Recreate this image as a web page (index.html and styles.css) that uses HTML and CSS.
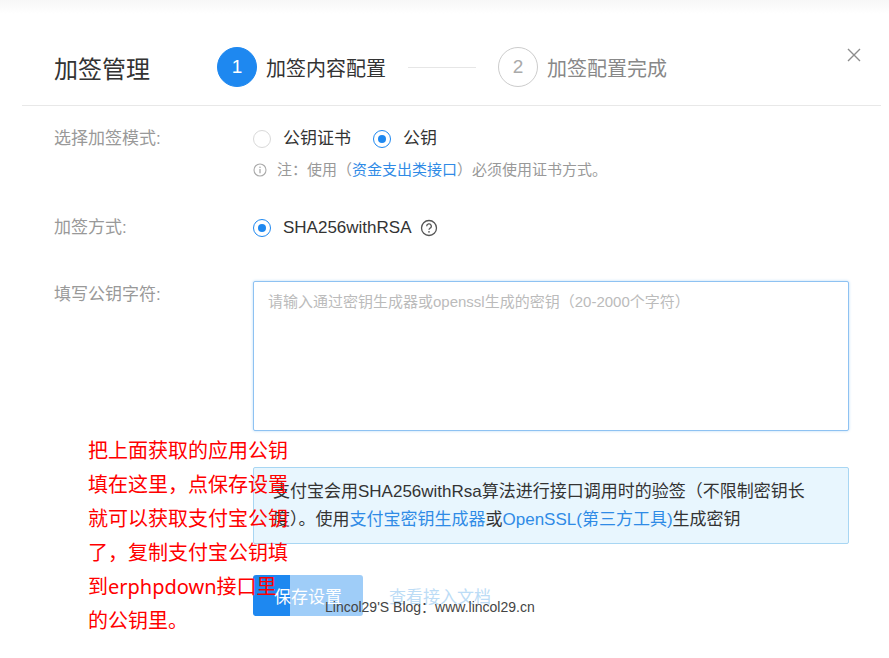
FILE: index.html
```html
<!DOCTYPE html>
<html lang="zh-CN">
<head>
  <meta charset="UTF-8" />
  <title>加签管理</title>
  <link rel="stylesheet" href="styles.css">
</head>
<body>

  <div class="dialog">
    <!-- 头部：标题 + 步骤条 -->
    <div class="dialog-head">
      <h2 class="title">加签管理</h2>
      <div class="steps">
        <span class="step-num active">1</span>
        <span class="step-text">加签内容配置</span>
        <span class="step-line"></span>
        <span class="step-num">2</span>
        <span class="step-text muted">加签配置完成</span>
      </div>
      <svg class="close" width="14" height="14" viewBox="0 0 14 14">
        <path d="M1 1L13 13M13 1L1 13" stroke="#8c8c8c" stroke-width="1.4" fill="none" />
      </svg>
    </div>

    <div class="dialog-body">
      <div class="row">
        <div class="label">选择加签模式:</div>
        <div class="field">
          <div class="radios">
            <label class="radio"><span class="dot"></span>公钥证书</label>
            <label class="radio"><span class="dot checked"></span>公钥</label>
          </div>
          <div class="note">
            <svg width="14" height="14" viewBox="0 0 14 14">
              <circle cx="7" cy="7" r="6" stroke="#aaa" stroke-width="1.1" fill="none" />
              <path d="M7 6v4.2" stroke="#aaa" stroke-width="1.3" />
              <circle cx="7" cy="4.2" r="0.8" fill="#aaa" />
            </svg>
            注：使用（<a>资金支出类接口</a>）必须使用证书方式。
          </div>
        </div>
      </div>

      <div class="row row-sign">
        <div class="label">加签方式:</div>
        <div class="field">
          <label class="radio"><span class="dot checked"></span>SHA256withRSA
            <svg class="help" width="18" height="18" viewBox="0 0 18 18">
              <circle cx="9" cy="9" r="7.5" stroke="#555" stroke-width="1.3" fill="none" />
              <path d="M6.7 7.2a2.3 2.3 0 1 1 3.3 2c-.7.4-1 .8-1 1.6" stroke="#555" stroke-width="1.3" fill="none" />
              <circle cx="9" cy="12.8" r="0.85" fill="#555" />
            </svg>
          </label>
        </div>
      </div>

      <div class="row row-key">
        <div class="label label-top">填写公钥字符:</div>
        <div class="field">
          <textarea placeholder="请输入通过密钥生成器或openssl生成的密钥（20-2000个字符）"></textarea>
          <div class="tip">
            支付宝会用SHA256withRsa算法进行接口调用时的验签（不限制密钥长度）。使用<a>支付宝密钥生成器</a>或<a>OpenSSL(第三方工具)</a>生成密钥
          </div>
          <div class="actions">
            <button class="btn-save">保存设置</button>
            <a class="doc-link">查看接入文档</a>
          </div>
        </div>
      </div>
    </div>
  </div>

  <!-- 截图上的红字批注和水印 -->
  <div class="annotation">
    把上面获取的应用公钥<br>
    填在这里，点保存设置<br>
    就可以获取支付宝公钥<br>
    了，复制支付宝公钥填<br>
    到erphpdown接口里<br>
    的公钥里。
  </div>
  <div class="watermark">Lincol29'S Blog：www.lincol29.cn</div>

</body>
</html>
```

FILE: styles.css
```css
body {
  margin: 0;
  font-family: "Liberation Sans", "Noto Sans CJK SC", sans-serif;
  background: linear-gradient(#f7f7f7, #fff 14px);
  color: #333;
  position: relative;
  height: 658px;
  overflow: hidden;
}

.dialog {
  margin-left: 22px;
  width: 859px;
}

.dialog-head {
  display: flex;
  align-items: center;
  height: 76px;
  padding: 29px 20px 0 32px;
  border-bottom: 1px solid #e8e8e8;
}

.title {
  margin: 0 67px 0 0;
  font-size: 24px;
  font-weight: normal;
  color: #333;
}

.steps {
  display: flex;
  align-items: center;
  flex: 1;
}

.step-num {
  width: 38px;
  height: 38px;
  border: 1px solid #ccc;
  border-radius: 50%;
  display: flex;
  align-items: center;
  justify-content: center;
  font-size: 19px;
  color: #aaa;
  margin-right: 9px;
}

.step-num.active {
  background: #1e88f0;
  border-color: #1e88f0;
  color: #fff;
}

.step-text {
  font-size: 20px;
  color: #333;
}

.step-text.muted { color: #888; }

.step-line {
  width: 68px;
  height: 1px;
  background: #e6e6e6;
  margin: 0 22px;
}

.close { margin-top: -24px; }

.dialog-body {
  padding: 22px 0 0 32px;
}

.row {
  display: flex;
}

.label {
  width: 199px;
  flex: none;
  font-size: 17px;
  line-height: 22px;
  color: #999;
}

.label-top { padding-top: 3px; }

.field { width: 596px; }

.radios { display: flex; gap: 22px; }

.radio {
  display: flex;
  align-items: center;
  font-size: 17px;
  line-height: 22px;
  color: #333;
}

.dot {
  width: 18px;
  height: 18px;
  border: 1px solid #d9d9d9;
  border-radius: 50%;
  margin-right: 12px;
  box-sizing: border-box;
  position: relative;
}

.dot.checked { border-color: #1e88f0; }

.dot.checked::after {
  content: "";
  position: absolute;
  left: 4px;
  top: 4px;
  width: 8px;
  height: 8px;
  border-radius: 50%;
  background: #1e88f0;
}

.help { margin-left: 8px; }

.note {
  margin-top: 10px;
  font-size: 15px;
  line-height: 20px;
  color: #999;
  display: flex;
  align-items: center;
}

.note svg { margin-right: 10px; }

a { color: #2f8be6; }

.row-sign { margin-top: 37px; }

.row-key { margin-top: 42px; }

textarea {
  display: block;
  width: 596px;
  height: 150px;
  box-sizing: border-box;
  border: 1px solid #8ec2f2;
  box-shadow: 0 0 3px #b7d9f7;
  border-radius: 2px;
  padding: 8px 14px;
  font-family: inherit;
  font-size: 15px;
  resize: none;
}

textarea::placeholder { color: #bbb; }

.tip {
  margin-top: 36px;
  box-sizing: border-box;
  height: 77px;
  padding: 10px 19px;
  background: #e8f6fe;
  border: 1px solid #a8d6f3;
  border-radius: 2px;
  font-size: 17px;
  line-height: 28px;
  color: #333;
}

.actions {
  display: flex;
  align-items: center;
  margin-top: 31px;
}

.btn-save {
  width: 110px;
  height: 41px;
  border: none;
  border-radius: 3px;
  background: linear-gradient(to right, #1e88f0 37px, #9fcdf8 37px);
  color: #fff;
  font-family: inherit;
  font-size: 17px;
}

.doc-link {
  margin-left: 26px;
  font-size: 17px;
  color: #bcdcf6;
}

.annotation {
  position: absolute;
  left: 88px;
  top: 434px;
  font-family: "Noto Sans", "Noto Sans CJK SC", sans-serif;
  font-size: 20px;
  line-height: 34px;
  color: #f00;
}

.watermark {
  position: absolute;
  left: 325px;
  top: 596px;
  font-size: 14px;
  color: #444;
}
```
